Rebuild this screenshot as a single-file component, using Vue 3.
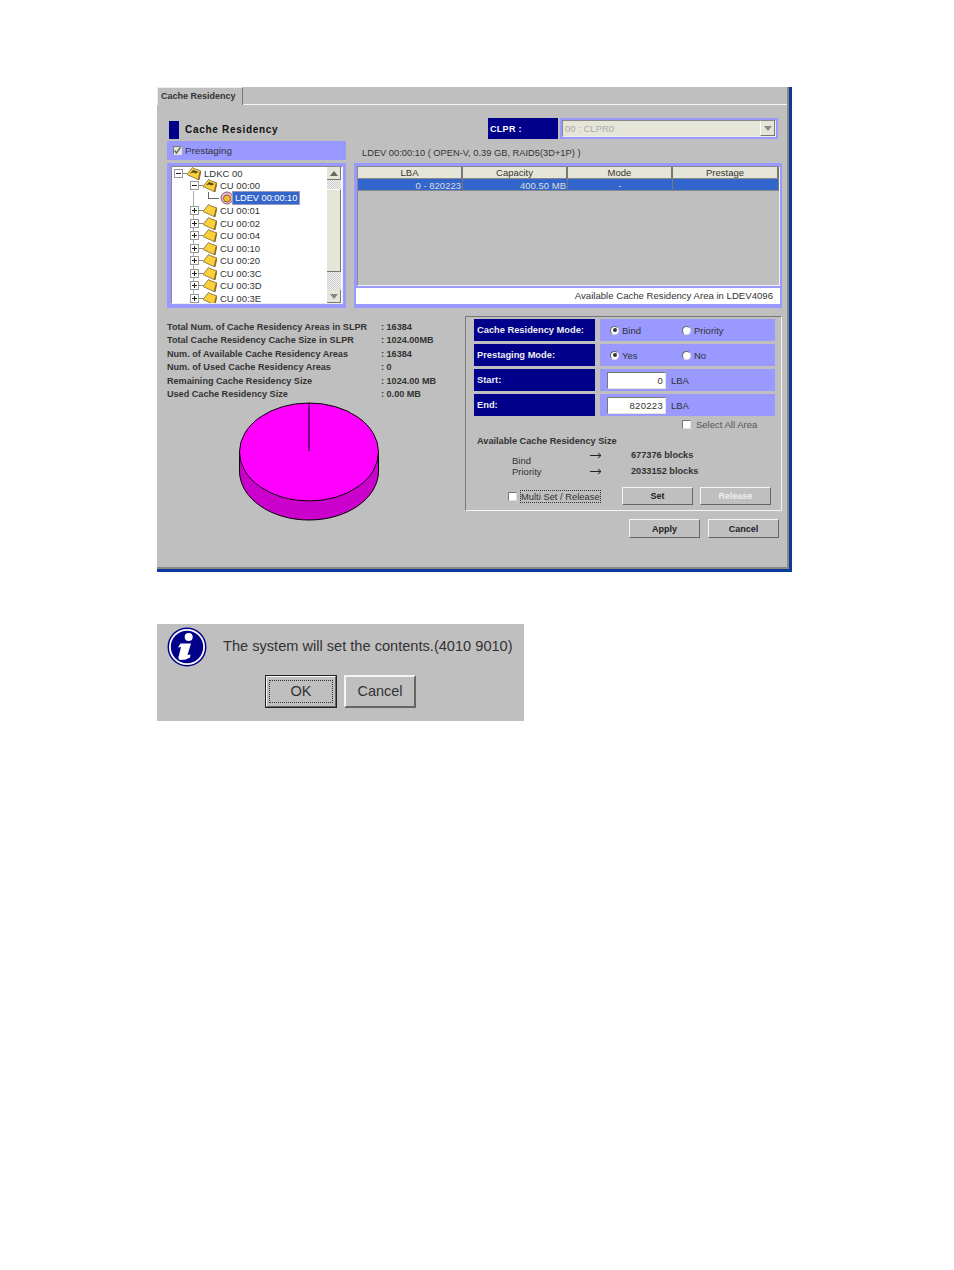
<template>
  <div class="page">
    <section class="window">
      <div class="tabbar">
        <div class="tab">Cache Residency</div>
        <div class="tabline"></div>
      </div>

      <div class="content">
        <div class="title-row">
          <div class="title">
            <span class="title-mark"></span>
            <span>Cache Residency</span>
          </div>
          <div class="clpr">
            <div class="clpr-label">CLPR :</div>
            <div class="clpr-box">
              <div class="clpr-select">
                <span>00 : CLPR0</span>
                <span class="clpr-arrow"><i></i></span>
              </div>
            </div>
          </div>
        </div>

        <div class="main-grid">
          <label class="prestaging">
            <span class="check checked">
              <svg viewBox="0 0 7 7" width="7" height="7"><path d="M.5 3.500l2 2.500 4-5.500" fill="none" stroke="#666" stroke-width="1.400" /></svg>
            </span>
            <span>Prestaging</span>
          </label>
          <div class="ldev-info">LDEV 00:00:10 ( OPEN-V, 0.39 GB, RAID5(3D+1P) )</div>

          <div class="panel tree-panel">
            <div class="tree">
              <div class="tree-rows">
                <span class="tree-rail"></span>
                <div v-for="node in treeNodes" :key="node.label" class="tree-row" :class="'lvl' + node.level">
                  <svg v-if="node.type !== 'ldev'" class="expander" viewBox="0 0 9 9" width="9" height="9">
                    <rect x="0.5" y="0.5" width="8" height="8" fill="#fff" stroke="#999" />
                    <path d="M2 4.500h5" stroke="#222" />
                    <path v-if="!node.open" d="M4.500 2v5" stroke="#222" />
                  </svg>
                  <span v-else class="elbow"></span>
                  <span class="dash"></span>
                  <svg v-if="node.type !== 'ldev'" class="folder" viewBox="0 0 14 13" width="14" height="13">
                    <path d="M0 7.500L5.500 .5l1.500 1 7 2.500-2 9z" fill="#fbd03a" stroke="#4a3e18" stroke-width="0.6" />
                    <path d="M14 4l-2 9-1.300-.4 2-8.200z" fill="#8a6a20" />
                    <path v-if="node.open" d="M3 6.500L6 3l5.500 2-3 1.500-2.500-1z" fill="#5a4a20" />
                  </svg>
                  <svg v-else class="folder" viewBox="0 0 14 14" width="14" height="14">
                    <circle cx="7" cy="7" r="6" fill="#e8b8d0" stroke="#8a5a6a" />
                    <circle cx="7" cy="7.500" r="3.500" fill="#f0c030" stroke="#804020" stroke-width="0.8" />
                  </svg>
                  <span class="tree-label" :class="{ selected: node.type === 'ldev' }">{{ node.label }}</span>
                </div>
              </div>
              <div class="scrollbar">
                <span class="scroll-btn"><i class="arrow-up"></i></span>
                <span class="scroll-track gap-top"></span>
                <span class="scroll-thumb"></span>
                <span class="scroll-track"></span>
                <span class="scroll-btn"><i class="arrow-down"></i></span>
              </div>
            </div>
          </div>

          <div class="panel table-panel">
            <div class="table">
              <div class="table-head">
                <div v-for="col in columns" :key="col" class="th">{{ col }}</div>
              </div>
              <div class="table-row">
                <div class="td right">0 - 820223</div>
                <div class="td right">400.50 MB</div>
                <div class="td center">-</div>
                <div class="td"></div>
              </div>
            </div>
            <div class="table-foot">Available Cache Residency Area in LDEV4096</div>
          </div>
        </div>

        <div class="lower">
          <div class="stats">
            <div v-for="stat in stats" :key="stat.label" class="stat">
              <span>{{ stat.label }}</span>
              <span>: {{ stat.value }}</span>
            </div>
            <svg class="pie" viewBox="0 0 142 120" width="142" height="120">
              <path d="M1.500 50v19c0 27 31 49 69.500 49s69.500-22 69.500-49V50z" fill="#cc00cc" stroke="#000" />
              <ellipse cx="71" cy="50" rx="69.500" ry="49" fill="#ff00ff" stroke="#000" />
              <path d="M71 1v48" stroke="#000" />
            </svg>
          </div>

          <div class="settings">
            <div class="form-row">
              <div class="form-label">Cache Residency Mode:</div>
              <div class="form-value">
                <span class="radio-item"><span class="radio on"></span>Bind</span>
                <span class="radio-item"><span class="radio"></span>Priority</span>
              </div>
            </div>
            <div class="form-row">
              <div class="form-label">Prestaging Mode:</div>
              <div class="form-value">
                <span class="radio-item"><span class="radio on"></span>Yes</span>
                <span class="radio-item"><span class="radio"></span>No</span>
              </div>
            </div>
            <div class="form-row">
              <div class="form-label">Start:</div>
              <div class="form-value lba">
                <span class="lba-input">0</span><span>LBA</span>
              </div>
            </div>
            <div class="form-row">
              <div class="form-label">End:</div>
              <div class="form-value lba">
                <span class="lba-input">820223</span><span>LBA</span>
              </div>
            </div>

            <label class="select-all"><span class="check"></span>Select All Area</label>
            <div class="avail-title">Available Cache Residency Size</div>
            <div v-for="size in sizes" :key="size.name" class="avail-row">
              <span class="avail-name" :class="{ low: size.low }">{{ size.name }}</span>
              <svg class="avail-arrow" viewBox="0 0 12 7" width="12" height="7">
                <path d="M0 3.500h11M8 1l3 2.500-3 2.500" fill="none" stroke="#222" />
              </svg>
              <b>{{ size.blocks }} blocks</b>
            </div>

            <div class="settings-actions">
              <label class="multi"><span class="check"></span><span class="focus-text">Multi Set / Release</span></label>
              <button class="btn strong">Set</button>
              <button class="btn disabled">Release</button>
            </div>
          </div>
        </div>

        <div class="actions">
          <button class="btn strong">Apply</button>
          <button class="btn strong">Cancel</button>
        </div>
      </div>
    </section>

    <section class="dialog">
      <div class="dialog-msg">
        <svg class="info" viewBox="0 0 40 40" width="40" height="40">
          <circle cx="20" cy="20" r="19.500" fill="#00008b" />
          <circle cx="20" cy="20" r="18" fill="#fff" />
          <circle cx="20" cy="20" r="16.200" fill="#00008b" />
          <circle cx="21.700" cy="10" r="4" fill="#fff" />
          <path d="M13.500 16.500h10.500l-3.500 11.500 3-.5-.5 3q-4 2.500-9 2.500-3 0-2.500-3l2.500-10-3 .5z" fill="#fff" />
        </svg>
        <span class="dialog-text">The system will set the contents.(4010 9010)</span>
      </div>
      <div class="dialog-actions">
        <button class="dlg-btn default"><span>OK</span></button>
        <button class="dlg-btn"><span>Cancel</span></button>
      </div>
    </section>
  </div>
</template>

<script setup>
const treeNodes = [
  { label: 'LDKC 00', level: 0, open: true },
  { label: 'CU 00:00', level: 1, open: true },
  { label: 'LDEV 00:00:10', level: 2, type: 'ldev' },
  { label: 'CU 00:01', level: 1 },
  { label: 'CU 00:02', level: 1 },
  { label: 'CU 00:04', level: 1 },
  { label: 'CU 00:10', level: 1 },
  { label: 'CU 00:20', level: 1 },
  { label: 'CU 00:3C', level: 1 },
  { label: 'CU 00:3D', level: 1 },
  { label: 'CU 00:3E', level: 1 },
]

const columns = ['LBA', 'Capacity', 'Mode', 'Prestage']

const stats = [
  { label: 'Total Num. of Cache Residency Areas in SLPR', value: '16384' },
  { label: 'Total Cache Residency Cache Size in SLPR', value: '1024.00MB' },
  { label: 'Num. of Available Cache Residency Areas', value: '16384' },
  { label: 'Num. of Used Cache Residency Areas', value: '0' },
  { label: 'Remaining Cache Residency Size', value: '1024.00 MB' },
  { label: 'Used Cache Residency Size', value: '0.00 MB' },
]

const sizes = [
  { name: 'Bind', blocks: '677376', low: true },
  { name: 'Priority', blocks: '2033152' },
]
</script>

<style>
html, body {
  margin: 0;
  background: #fff;
}
</style>

<style scoped>
.page {
  height: 1270px;
  box-sizing: border-box;
  padding: 87px 0 0 157px;
  font-family: "Liberation Sans", Arial, sans-serif;
  font-size: 9.5px;
  color: #222;
}

.window {
  width: 635px;
  height: 485px;
  box-sizing: border-box;
  background: #bfbfbf;
  border-right: 3px solid #0a3a9c;
  border-bottom: 3px solid #0a3a9c;
  box-shadow: inset -2px -2px 0 #8a8a80;
}

.tabbar {
  display: flex;
  height: 18px;
}

.tab {
  width: 86px;
  box-sizing: border-box;
  padding: 3px 0 0 3px;
  border-top: 1px solid #eee;
  border-left: 1px solid #eee;
  border-right: 1px solid #777;
  font-size: 9px;
  font-weight: bold;
  color: #333;
}

.tabline {
  width: 544px;
  height: 17px;
  border-bottom: 1px solid #f4f4f4;
}

.content {
  padding: 13px 0 0 10px;
}

.title-row {
  display: flex;
  justify-content: space-between;
  width: 611px;
  height: 23px;
}

.title {
  display: flex;
  align-items: center;
  padding-left: 2px;
  height: 23px;
  gap: 6px;
  font-size: 10px;
  font-weight: bold;
  letter-spacing: 0.7px;
  color: #111;
}

.title-mark {
  width: 10px;
  height: 18px;
  background: #00008b;
}

.clpr {
  display: flex;
  gap: 2px;
  height: 21px;
}

.clpr-label {
  width: 70px;
  box-sizing: border-box;
  padding: 6px 0 0 2px;
  background: #00008b;
  color: #fff;
  font-size: 9px;
  font-weight: bold;
  letter-spacing: 0.3px;
}

.clpr-box {
  width: 218px;
  box-sizing: border-box;
  padding: 2px;
  background: #9999ff;
}

.clpr-select {
  display: flex;
  justify-content: space-between;
  align-items: center;
  height: 100%;
  box-sizing: border-box;
  padding-left: 2px;
  background: #e6e6d8;
  border: 1px solid #888;
  border-right-color: #eee;
  border-bottom-color: #eee;
  color: #aaa;
}

.clpr-arrow {
  display: flex;
  align-items: center;
  justify-content: center;
  width: 15px;
  height: 15px;
  background: #e6e6d8;
  border-left: 1px solid #fff;
  border-right: 1px solid #777;
  border-bottom: 1px solid #777;
  box-sizing: border-box;
}

.clpr-arrow i,
.arrow-down {
  width: 0;
  height: 0;
  border-left: 4px solid transparent;
  border-right: 4px solid transparent;
  border-top: 5px solid #888;
}

.arrow-up {
  width: 0;
  height: 0;
  border-left: 4px solid transparent;
  border-right: 4px solid transparent;
  border-bottom: 5px solid #666;
}

.main-grid {
  display: grid;
  grid-template-columns: 179px 428px;
  grid-template-rows: 19px 145px;
  column-gap: 8px;
  row-gap: 3px;
}

.prestaging {
  display: flex;
  align-items: center;
  gap: 3px;
  padding-left: 6px;
  background: #9999ff;
  color: #333;
  font-size: 9.8px;
}

.check {
  display: inline-flex;
  align-items: center;
  justify-content: center;
  box-sizing: border-box;
  width: 9px;
  height: 9px;
  flex: none;
  background: #fff;
  border: 1px solid #777;
  border-right-color: #ddd;
  border-bottom-color: #ddd;
}

.check.checked {
  background: #e6e6d8;
}

.ldev-info {
  padding: 7px 0 0 8px;
  font-size: 9.3px;
  color: #333;
}

.panel {
  background: #9999ff;
  box-sizing: border-box;
}

.tree-panel {
  padding: 3px 3px 4px 4px;
}

.tree {
  display: flex;
  height: 100%;
  background: #fff;
  border: 1px solid #888;
  border-right-color: #eee;
  border-bottom-color: #eee;
  box-sizing: border-box;
  overflow: hidden;
}

.tree-rows {
  position: relative;
  flex: 1;
  overflow: hidden;
}

.tree-rail {
  position: absolute;
  left: 21px;
  top: 24px;
  height: 120px;
  border-left: 1px solid #aaa;
}

.tree-row {
  position: relative;
  display: flex;
  align-items: center;
  height: 12.500px;
  white-space: nowrap;
  color: #333;
}

.lvl0 { padding-left: 2px; }
.lvl1 { padding-left: 18px; }
.lvl2 { padding-left: 36px; }

.expander {
  flex: none;
  background: #fff;
}

.elbow {
  width: 10px;
  height: 6px;
  margin-top: -6px;
  margin-right: 1px;
  border-left: 1px solid #666;
  border-bottom: 1px solid #666;
  flex: none;
}

.dash {
  width: 4px;
  border-top: 1px solid #888;
  flex: none;
}

.lvl2 .dash { width: 0; }

.folder {
  flex: none;
  margin-right: 3px;
}

.lvl2 .folder { margin-right: -1px; }

.tree-label.selected {
  background: #3366cc;
  color: #fff;
  padding: 1px 2px;
  font-size: 9.2px;
  outline: 1px solid #99b;
}

.scrollbar {
  display: flex;
  flex-direction: column;
  width: 14px;
  flex: none;
  margin-right: 1px;
}

.scroll-btn {
  display: flex;
  align-items: center;
  justify-content: center;
  height: 13px;
  flex: none;
  background: #e6e6d8;
  border-right: 1px solid #777;
  border-bottom: 1px solid #777;
  box-sizing: border-box;
}

.scroll-track {
  flex: 1;
  background: repeating-conic-gradient(#ccc 0 25%, #f2f2f2 0 50%) 0 0 / 2px 2px;
}

.scroll-track.gap-top {
  flex: none;
  height: 9px;
}

.scroll-thumb {
  height: 83px;
  flex: none;
  background: #e6e6d8;
  border-right: 1px solid #777;
  border-bottom: 1px solid #777;
  border-top: 1px solid #fff;
  box-sizing: border-box;
}

.table-panel {
  display: flex;
  flex-direction: column;
  padding: 3px 2px 4px 2px;
}

.table {
  flex: 1;
  margin-left: 1px;
  background: #bfbfbf;
  border: 1px solid #888;
  border-right-color: #f4f4f4;
  border-bottom-color: #f4f4f4;
}

.table-head,
.table-row {
  display: grid;
  grid-template-columns: 105px 105px 105px 1fr;
}

.table-head > .th {
  height: 12px;
  box-sizing: border-box;
  text-align: center;
  background: #e6e6d8;
  border-right: 2px solid #777;
  border-bottom: 1px solid #888;
  color: #333;
}

.table-row {
  height: 12px;
  background: #3366cc;
  color: #ddd;
  border-bottom: 1px solid #888;
  box-sizing: border-box;
}

.td {
  padding: 1px 1px 0;
  border-right: 1px solid #777;
}

.td.right { text-align: right; }
.td.center { text-align: center; }

.table-foot {
  height: 16px;
  flex: none;
  margin-top: 2px;
  padding: 2px 7px 0 0;
  box-sizing: border-box;
  text-align: right;
  font-size: 9.6px;
  background: #fff;
  color: #333;
}

.lower {
  display: flex;
  height: 195px;
  margin-top: 8px;
}

.stats {
  width: 298px;
  padding-top: 5px;
  font-size: 9.1px;
  font-weight: bold;
  color: #333;
}

.stat {
  display: grid;
  grid-template-columns: 214px 1fr;
  height: 13.400px;
  line-height: 13.400px;
  white-space: nowrap;
}

.pie {
  display: block;
  margin: 1px 0 0 71px;
}

.settings {
  width: 317px;
  height: 195px;
  box-sizing: border-box;
  padding: 2px 6px 0 8px;
  border: 1px solid #777;
  border-right-color: #f4f4f4;
  border-bottom-color: #f4f4f4;
  color: #333;
}

.form-row {
  display: grid;
  grid-template-columns: 121px 175px;
  column-gap: 5px;
  height: 22px;
  margin-bottom: 3px;
}

.form-label {
  display: flex;
  align-items: center;
  padding-left: 3px;
  background: #00008b;
  color: #eee;
  font-size: 9.3px;
  font-weight: bold;
}

.form-value {
  display: flex;
  align-items: center;
  background: #9999ff;
  padding-left: 10px;
}

.form-value.lba {
  padding-left: 7px;
  gap: 5px;
}

.radio-item {
  display: flex;
  align-items: center;
  gap: 3px;
  width: 72px;
}

.radio {
  position: relative;
  box-sizing: border-box;
  width: 9px;
  height: 9px;
  border-radius: 50%;
  background: #fff;
  border: 1px solid #666;
  border-right-color: #ddd;
  border-bottom-color: #ddd;
}

.radio.on::after {
  content: "";
  position: absolute;
  left: 1.500px;
  top: 1.500px;
  width: 4px;
  height: 4px;
  border-radius: 50%;
  background: #333;
}

.lba-input {
  width: 59px;
  height: 17px;
  box-sizing: border-box;
  padding-right: 2px;
  text-align: right;
  background: #fff;
  border-top: 1px solid #777;
  border-left: 1px solid #777;
  border-right: 1px solid #e6e6d8;
  border-bottom: 1px solid #e6e6d8;
  line-height: 15px;
  letter-spacing: 0.3px;
}

.select-all {
  display: flex;
  align-items: center;
  gap: 5px;
  height: 10px;
  padding-left: 208px;
  margin-top: 1px;
  color: #555;
}

.avail-title {
  margin: 4px 0 0 3px;
  height: 14px;
  line-height: 16px;
  font-size: 9.2px;
  font-weight: bold;
}

.avail-row {
  display: flex;
  align-items: center;
  height: 16px;
  padding-left: 38px;
}

.avail-row b {
  font-size: 9.2px;
}

.avail-name {
  width: 78px;
}

.avail-name.low {
  margin-top: 10px;
}

.avail-arrow {
  margin-right: 29px;
}

.settings-actions {
  display: flex;
  align-items: center;
  margin-top: 8px;
}

.multi {
  display: flex;
  align-items: center;
  gap: 4px;
  width: 148px;
  padding-left: 34px;
  box-sizing: border-box;
  font-size: 9.4px;
}

.focus-text {
  outline: 1px dotted #333;
}

.btn {
  width: 71px;
  height: 18px;
  padding: 0;
  font: bold 9px "Liberation Sans", Arial, sans-serif;
  color: #222;
  background: #bfbfbf;
  border: 1px solid #f4f4f4;
  border-right-color: #666;
  border-bottom-color: #666;
}

.settings-actions .btn + .btn {
  margin-left: 7px;
}

.btn.disabled {
  color: #eee;
}

.actions {
  display: flex;
  justify-content: flex-end;
  gap: 8px;
  width: 612px;
  margin-top: 8px;
}

.actions .btn {
  height: 19px;
}

.dialog {
  width: 367px;
  height: 97px;
  margin-top: 52px;
  background: #bfbfbf;
  color: #333;
  font-size: 14.600px;
}

.dialog-msg {
  display: flex;
  align-items: center;
  gap: 16px;
  height: 46px;
  padding-left: 10px;
  box-sizing: border-box;
}

.dialog-text {
  margin-bottom: 2px;
  white-space: nowrap;
}

.info {
  flex: none;
}

.dialog-actions {
  display: flex;
  gap: 7px;
  padding: 5px 0 0 108px;
}

.dlg-btn {
  width: 72px;
  height: 33px;
  padding: 3px;
  font: 14.500px "Liberation Sans", Arial, sans-serif;
  color: #333;
  background: #bfbfbf;
  border: 2px solid #f4f4f4;
  border-right-color: #666;
  border-bottom-color: #666;
}

.dlg-btn span {
  display: block;
  line-height: 21px;
}

.dlg-btn.default {
  outline: 1px solid #222;
  outline-offset: -1px;
}

.dlg-btn.default span {
  outline: 1px dotted #333;
}
</style>
